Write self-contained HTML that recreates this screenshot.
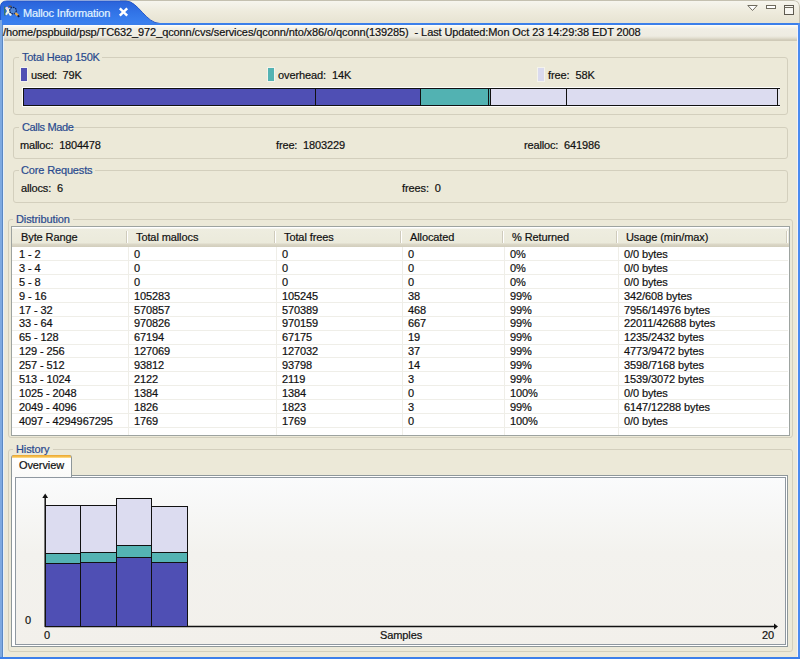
<!DOCTYPE html>
<html><head><meta charset="utf-8">
<style>
*{margin:0;padding:0;box-sizing:border-box}
html,body{width:800px;height:659px;overflow:hidden;background:#ECE9D8;font-family:"Liberation Sans",sans-serif;font-size:11px;color:#000}
.a{position:absolute}
.t{position:absolute;white-space:pre;font:11px/13px "Liberation Sans",sans-serif;letter-spacing:-0.1px;color:#111;-webkit-text-stroke:0.2px}
.lbl{color:#294A8E}
.grp{position:absolute;border:1px solid #D3CFBD;border-radius:3px}
.sw{position:absolute;width:6px;height:13px}
.gap{position:absolute;height:8px;background:#ECE9D8}
</style></head>
<body>
<!-- title area -->
<div class="a" style="left:0;top:0;width:800px;height:23px;background:linear-gradient(#F7F6F0,#EEEBDD 50%,#E7E3D2)"></div>
<svg class="a" style="left:0;top:0" width="800" height="23"><path d="M120 0.5 L793 0.5 Q799.5 0.5 799.5 7 L799.5 23" fill="none" stroke="#C4C0B0" stroke-width="1"/><path d="M800 0 L794 0 Q800 0 800 6 Z" fill="#F4F2EA"/></svg>
<!-- tab -->
<svg class="a" style="left:0;top:0" width="200" height="26">
<defs><linearGradient id="tg" x1="0" y1="0" x2="0" y2="1"><stop offset="0" stop-color="#2A62DA"/><stop offset="0.5" stop-color="#3275E8"/><stop offset="1" stop-color="#3D84F2"/></linearGradient></defs>
<path d="M0.5 26 L0.5 7 Q0.5 1 7 1 L126 1 C138 1 146 23.5 160 23.5 L200 23.5 L200 26 Z" fill="url(#tg)" stroke="#2456C8" stroke-width="1"/>
</svg>
<!-- tab icon -->
<svg class="a" style="left:0;top:0" width="22" height="20">
<path d="M4.8 6.5 L4.8 15.5" stroke="#3A7A40" stroke-width="1.3" opacity="0.85"/>
<path d="M6.2 7.5 L11 15.5" stroke="#F8F8F2" stroke-width="2.3"/>
<path d="M6.2 7.2 L7.8 9.4" stroke="#F2D2E6" stroke-width="2.2"/>
<path d="M9.8 8.2 L6 14.8" stroke="#EEF4E6" stroke-width="2"/>
<path d="M8.6 6.3 L11.6 6.3" stroke="#705838" stroke-width="1.3"/>
<circle cx="13" cy="10.6" r="3.3" fill="#5088DA" stroke="#0C2256" stroke-width="1.3" stroke-dasharray="1.7 0.8"/>
<path d="M15.4 13 L18 15.6" stroke="#E8A848" stroke-width="2.4"/>
<path d="M17.7 15.3 L19.2 16.8" stroke="#0E1C48" stroke-width="1.8"/>
</svg>
<div class="t" style="left:23px;top:7px;color:#E2F4FF;letter-spacing:-0.15px">Malloc Information</div>
<svg class="a" style="left:118px;top:7px" width="11" height="10"><path d="M1.8 1.3 L9.2 8.7 M9.2 1.3 L1.8 8.7" stroke="#fff" stroke-width="2.4"/></svg>
<!-- view menu icons -->
<svg class="a" style="left:745px;top:3px" width="52" height="14">
<path d="M2.8 2.5 L12.2 2.5 L7.5 7.5 Z" fill="#fff" stroke="#6E6A5E" stroke-width="1"/>
<rect x="21.5" y="2.5" width="9" height="3" fill="#fff" stroke="#6E6A5E"/>
<rect x="39.5" y="2.5" width="9" height="9" fill="#F8F7F2" stroke="#5E5A50"/>
<line x1="39.5" y1="4.5" x2="48.5" y2="4.5" stroke="#6E6A5E" stroke-width="1"/>
</svg>

<!-- blue frame -->
<div class="a" style="left:0;top:23px;width:800px;height:2px;background:#3B7FEA"></div>
<div class="a" style="left:0;top:20px;width:2px;height:639px;background:#7EA9E0"></div>
<div class="a" style="left:2px;top:25px;width:1px;height:634px;background:#5A88C4"></div>
<div class="a" style="left:3px;top:25px;width:1px;height:632px;background:#E4F0FC"></div>
<div class="a" style="left:797px;top:25px;width:1px;height:632px;background:#F4F2FA"></div>
<div class="a" style="left:798px;top:23px;width:2px;height:636px;background:#4A8BF0"></div>
<div class="a" style="left:0;top:657px;width:800px;height:2px;background:#3B7FEA"></div>
<!-- path bar -->
<div class="a" style="left:4px;top:25px;width:793px;height:16px;background:linear-gradient(#FFFFFF 0,#F8F7F0 1.5px,#F0EEE5 4px,#EEECE2 11px,#E2DFD0 13px,#CFCAB8 15px)"></div>
<div class="t" style="left:3px;top:26px">/home/pspbuild/psp/TC632_972_qconn/cvs/services/qconn/nto/x86/o/qconn(139285)  - Last Updated:Mon Oct 23 14:29:38 EDT 2008</div>

<!-- Total Heap group -->
<div class="grp" style="left:13px;top:57px;width:775px;height:58px"></div>
<div class="gap" style="left:19px;top:53px;width:83px"></div>
<div class="t lbl" style="left:22px;top:51px;letter-spacing:-0.25px">Total Heap 150K</div>
<div class="sw" style="left:21px;top:68px;background:#5050B4;box-shadow:0 0 0 1px #F4F3EC"></div>
<div class="t" style="left:31px;top:69px;letter-spacing:-0.2px">used:  79K</div>
<div class="sw" style="left:268px;top:68px;background:#54B3B3;box-shadow:0 0 0 1px #F4F3EC"></div>
<div class="t" style="left:278px;top:69px">overhead:  14K</div>
<div class="sw" style="left:538px;top:68px;background:#DADAEE;box-shadow:0 0 0 1px #F4F3EC"></div>
<div class="t" style="left:548px;top:69px">free:  58K</div>
<!-- heap bar -->
<div class="a" style="left:22px;top:87px;width:758px;height:20px;background:#FDFDFB"></div>
<div class="a" style="left:23px;top:88px;width:757px;height:18px;background:#111"></div>
<div class="a" style="left:24px;top:89px;width:396px;height:16px;background:#4F4FB4"></div>
<div class="a" style="left:421px;top:89px;width:67px;height:16px;background:#52B2B2"></div>
<div class="a" style="left:489px;top:89px;width:1px;height:16px;background:#52B2B2"></div>
<div class="a" style="left:491px;top:89px;width:286px;height:16px;background:#DCDCF0"></div>
<div class="a" style="left:315px;top:89px;width:1px;height:16px;background:#111"></div>
<div class="a" style="left:566px;top:89px;width:1px;height:16px;background:#111"></div>
<div class="a" style="left:778px;top:89px;width:2px;height:16px;background:#E6E6EC"></div>

<!-- Calls made -->
<div class="grp" style="left:13px;top:127px;width:775px;height:32px"></div>
<div class="gap" style="left:19px;top:123px;width:55px"></div>
<div class="t lbl" style="left:22px;top:121px;letter-spacing:-0.35px">Calls Made</div>
<div class="t" style="left:20px;top:139px;letter-spacing:-0.2px">malloc:  1804478</div>
<div class="t" style="left:276px;top:139px;letter-spacing:-0.15px">free:  1803229</div>
<div class="t" style="left:524px;top:139px;letter-spacing:-0.15px">realloc:  641986</div>

<!-- Core requests -->
<div class="grp" style="left:13px;top:170px;width:775px;height:33px"></div>
<div class="gap" style="left:19px;top:166px;width:76px"></div>
<div class="t lbl" style="left:21px;top:164px;letter-spacing:-0.15px">Core Requests</div>
<div class="t" style="left:21px;top:182px;letter-spacing:-0.15px">allocs:  6</div>
<div class="t" style="left:402px;top:182px">frees:  0</div>

<!-- Distribution -->
<div class="grp" style="left:8px;top:219px;width:785px;height:219px"></div>
<div class="gap" style="left:13px;top:215px;width:60px"></div>
<div class="t lbl" style="left:16px;top:213px">Distribution</div>
<div class="a" style="left:11px;top:226px;width:779px;height:210px;border:1px solid #9DA3A0;background:#fff"></div>

<div class="a" style="left:12px;top:227px;width:777px;height:20px;background:linear-gradient(#FFFFFF 0,#FFFFFF 1px,#EEEDE0 2px,#EBEADB 16px,#DCD8C8 17px,#D2CEBC 20px)"></div>
<div class="a" style="left:126px;top:231px;width:1px;height:12px;background:#CFCBBC"></div>
<div class="a" style="left:127px;top:231px;width:1px;height:12px;background:#FFFFFF"></div>
<div class="a" style="left:274px;top:231px;width:1px;height:12px;background:#CFCBBC"></div>
<div class="a" style="left:275px;top:231px;width:1px;height:12px;background:#FFFFFF"></div>
<div class="a" style="left:400px;top:231px;width:1px;height:12px;background:#CFCBBC"></div>
<div class="a" style="left:401px;top:231px;width:1px;height:12px;background:#FFFFFF"></div>
<div class="a" style="left:502px;top:231px;width:1px;height:12px;background:#CFCBBC"></div>
<div class="a" style="left:503px;top:231px;width:1px;height:12px;background:#FFFFFF"></div>
<div class="a" style="left:616px;top:231px;width:1px;height:12px;background:#CFCBBC"></div>
<div class="a" style="left:617px;top:231px;width:1px;height:12px;background:#FFFFFF"></div>
<div class="a" style="left:786px;top:231px;width:1px;height:12px;background:#CFCBBC"></div>
<div class="a" style="left:787px;top:231px;width:1px;height:12px;background:#FFFFFF"></div>
<div class="t" style="left:21px;top:231px">Byte Range</div>
<div class="t" style="left:136px;top:231px">Total mallocs</div>
<div class="t" style="left:284px;top:231px">Total frees</div>
<div class="t" style="left:410px;top:231px">Allocated</div>
<div class="t" style="left:512px;top:231px">% Returned</div>
<div class="t" style="left:626px;top:231px">Usage (min/max)</div>
<div class="a" style="left:12px;top:260px;width:776px;height:1px;background:#EFEEE8"></div>
<div class="a" style="left:12px;top:274px;width:776px;height:1px;background:#EFEEE8"></div>
<div class="a" style="left:12px;top:288px;width:776px;height:1px;background:#EFEEE8"></div>
<div class="a" style="left:12px;top:302px;width:776px;height:1px;background:#EFEEE8"></div>
<div class="a" style="left:12px;top:316px;width:776px;height:1px;background:#EFEEE8"></div>
<div class="a" style="left:12px;top:330px;width:776px;height:1px;background:#EFEEE8"></div>
<div class="a" style="left:12px;top:344px;width:776px;height:1px;background:#EFEEE8"></div>
<div class="a" style="left:12px;top:357px;width:776px;height:1px;background:#EFEEE8"></div>
<div class="a" style="left:12px;top:371px;width:776px;height:1px;background:#EFEEE8"></div>
<div class="a" style="left:12px;top:385px;width:776px;height:1px;background:#EFEEE8"></div>
<div class="a" style="left:12px;top:399px;width:776px;height:1px;background:#EFEEE8"></div>
<div class="a" style="left:12px;top:413px;width:776px;height:1px;background:#EFEEE8"></div>
<div class="a" style="left:12px;top:427px;width:776px;height:1px;background:#EFEEE8"></div>
<div class="a" style="left:128px;top:247px;width:1px;height:188px;background:#EFEEE8"></div>
<div class="a" style="left:276px;top:247px;width:1px;height:188px;background:#EFEEE8"></div>
<div class="a" style="left:402px;top:247px;width:1px;height:188px;background:#EFEEE8"></div>
<div class="a" style="left:504px;top:247px;width:1px;height:188px;background:#EFEEE8"></div>
<div class="a" style="left:618px;top:247px;width:1px;height:188px;background:#EFEEE8"></div>
<div class="t" style="left:19px;top:248px">1 - 2</div>
<div class="t" style="left:134px;top:248px">0</div>
<div class="t" style="left:282px;top:248px">0</div>
<div class="t" style="left:408px;top:248px">0</div>
<div class="t" style="left:510px;top:248px">0%</div>
<div class="t" style="left:624px;top:248px">0/0 bytes</div>
<div class="t" style="left:19px;top:262px">3 - 4</div>
<div class="t" style="left:134px;top:262px">0</div>
<div class="t" style="left:282px;top:262px">0</div>
<div class="t" style="left:408px;top:262px">0</div>
<div class="t" style="left:510px;top:262px">0%</div>
<div class="t" style="left:624px;top:262px">0/0 bytes</div>
<div class="t" style="left:19px;top:276px">5 - 8</div>
<div class="t" style="left:134px;top:276px">0</div>
<div class="t" style="left:282px;top:276px">0</div>
<div class="t" style="left:408px;top:276px">0</div>
<div class="t" style="left:510px;top:276px">0%</div>
<div class="t" style="left:624px;top:276px">0/0 bytes</div>
<div class="t" style="left:19px;top:290px">9 - 16</div>
<div class="t" style="left:134px;top:290px">105283</div>
<div class="t" style="left:282px;top:290px">105245</div>
<div class="t" style="left:408px;top:290px">38</div>
<div class="t" style="left:510px;top:290px">99%</div>
<div class="t" style="left:624px;top:290px">342/608 bytes</div>
<div class="t" style="left:19px;top:304px">17 - 32</div>
<div class="t" style="left:134px;top:304px">570857</div>
<div class="t" style="left:282px;top:304px">570389</div>
<div class="t" style="left:408px;top:304px">468</div>
<div class="t" style="left:510px;top:304px">99%</div>
<div class="t" style="left:624px;top:304px">7956/14976 bytes</div>
<div class="t" style="left:19px;top:317px">33 - 64</div>
<div class="t" style="left:134px;top:317px">970826</div>
<div class="t" style="left:282px;top:317px">970159</div>
<div class="t" style="left:408px;top:317px">667</div>
<div class="t" style="left:510px;top:317px">99%</div>
<div class="t" style="left:624px;top:317px">22011/42688 bytes</div>
<div class="t" style="left:19px;top:331px">65 - 128</div>
<div class="t" style="left:134px;top:331px">67194</div>
<div class="t" style="left:282px;top:331px">67175</div>
<div class="t" style="left:408px;top:331px">19</div>
<div class="t" style="left:510px;top:331px">99%</div>
<div class="t" style="left:624px;top:331px">1235/2432 bytes</div>
<div class="t" style="left:19px;top:345px">129 - 256</div>
<div class="t" style="left:134px;top:345px">127069</div>
<div class="t" style="left:282px;top:345px">127032</div>
<div class="t" style="left:408px;top:345px">37</div>
<div class="t" style="left:510px;top:345px">99%</div>
<div class="t" style="left:624px;top:345px">4773/9472 bytes</div>
<div class="t" style="left:19px;top:359px">257 - 512</div>
<div class="t" style="left:134px;top:359px">93812</div>
<div class="t" style="left:282px;top:359px">93798</div>
<div class="t" style="left:408px;top:359px">14</div>
<div class="t" style="left:510px;top:359px">99%</div>
<div class="t" style="left:624px;top:359px">3598/7168 bytes</div>
<div class="t" style="left:19px;top:373px">513 - 1024</div>
<div class="t" style="left:134px;top:373px">2122</div>
<div class="t" style="left:282px;top:373px">2119</div>
<div class="t" style="left:408px;top:373px">3</div>
<div class="t" style="left:510px;top:373px">99%</div>
<div class="t" style="left:624px;top:373px">1539/3072 bytes</div>
<div class="t" style="left:19px;top:387px">1025 - 2048</div>
<div class="t" style="left:134px;top:387px">1384</div>
<div class="t" style="left:282px;top:387px">1384</div>
<div class="t" style="left:408px;top:387px">0</div>
<div class="t" style="left:510px;top:387px">100%</div>
<div class="t" style="left:624px;top:387px">0/0 bytes</div>
<div class="t" style="left:19px;top:401px">2049 - 4096</div>
<div class="t" style="left:134px;top:401px">1826</div>
<div class="t" style="left:282px;top:401px">1823</div>
<div class="t" style="left:408px;top:401px">3</div>
<div class="t" style="left:510px;top:401px">99%</div>
<div class="t" style="left:624px;top:401px">6147/12288 bytes</div>
<div class="t" style="left:19px;top:415px">4097 - 4294967295</div>
<div class="t" style="left:134px;top:415px">1769</div>
<div class="t" style="left:282px;top:415px">1769</div>
<div class="t" style="left:408px;top:415px">0</div>
<div class="t" style="left:510px;top:415px">100%</div>
<div class="t" style="left:624px;top:415px">0/0 bytes</div>

<!-- History -->
<div class="grp" style="left:8px;top:449px;width:785px;height:203px"></div>
<div class="gap" style="left:13px;top:445px;width:40px"></div>
<div class="t lbl" style="left:16px;top:443px">History</div>
<!-- tab folder -->
<div class="a" style="left:11px;top:475px;width:777px;height:172px;border:1px solid #8E979A;background:#fff"></div>
<div class="a" style="left:15px;top:477px;width:771px;height:168px;border:1px solid #8F98A0;background:linear-gradient(#FAFBFC,#F3F2EE 45%,#F2F0EB)"></div>
<div class="a" style="left:11px;top:455px;width:61px;height:22px;border:1px solid #8E979A;border-bottom:0;border-radius:3px 3px 0 0;background:#fff"></div>
<div class="a" style="left:12px;top:455px;width:59px;height:3px;border-radius:2px 2px 0 0;background:linear-gradient(#E8A630,#F8C050 60%,#FFE6A0)"></div>
<div class="a" style="left:12px;top:458px;width:59px;height:19px;background:linear-gradient(#FFFFFF,#FAFAF8)"></div>
<div class="t" style="left:19px;top:459px">Overview</div>
<!-- chart -->
<svg class="a" style="left:0;top:480px" width="800" height="165">
<g transform="translate(0,-480)">
<path d="M45.2 627 L45.2 497" stroke="#111" stroke-width="1.5"/>
<path d="M42.3 498 L45.2 493.5 L48.1 498 Z" fill="#111"/>
<path d="M45 626.4 L775 626.4" stroke="#111" stroke-width="1.5"/>
<path d="M774 623.4 L778 626.4 L774 629.4 Z" fill="#111"/>
</g>
</svg>
<div class="t" style="left:25px;top:614px">0</div>
<div class="t" style="left:44px;top:629px">0</div>
<div class="t" style="left:380px;top:629px">Samples</div>
<div class="t" style="left:762px;top:629px">20</div>

<div class="a" style="left:45px;top:505px;width:36px;height:122px;background:#DCDCF0;border:1px solid #111"></div>
<div class="a" style="left:45px;top:553px;width:36px;height:74px;background:#54B3B3;border:1px solid #111"></div>
<div class="a" style="left:45px;top:563px;width:36px;height:64px;background:#4F4FB4;border:1px solid #111"></div>
<div class="a" style="left:80px;top:505px;width:37px;height:122px;background:#DCDCF0;border:1px solid #111"></div>
<div class="a" style="left:80px;top:552px;width:37px;height:75px;background:#54B3B3;border:1px solid #111"></div>
<div class="a" style="left:80px;top:562px;width:37px;height:65px;background:#4F4FB4;border:1px solid #111"></div>
<div class="a" style="left:116px;top:498px;width:36px;height:129px;background:#DCDCF0;border:1px solid #111"></div>
<div class="a" style="left:116px;top:545px;width:36px;height:82px;background:#54B3B3;border:1px solid #111"></div>
<div class="a" style="left:116px;top:557px;width:36px;height:70px;background:#4F4FB4;border:1px solid #111"></div>
<div class="a" style="left:151px;top:506px;width:37px;height:121px;background:#DCDCF0;border:1px solid #111"></div>
<div class="a" style="left:151px;top:552px;width:37px;height:75px;background:#54B3B3;border:1px solid #111"></div>
<div class="a" style="left:151px;top:562px;width:37px;height:65px;background:#4F4FB4;border:1px solid #111"></div>
</body></html>
